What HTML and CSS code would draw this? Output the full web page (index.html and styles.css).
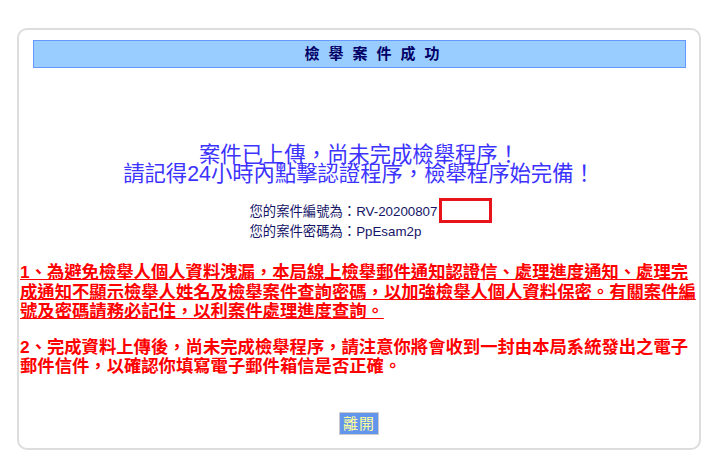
FILE: index.html
```html
<!DOCTYPE html>
<html lang="zh-Hant">
<head>
    <meta charset="UTF-8">
    <meta name="viewport" content="width=device-width, initial-scale=1.0">
    <link rel="stylesheet" href="styles.css">
    <title>檢舉案件成功</title>
</head>
<body>
    <div class="card">
        <div class="title_bar">檢舉案件成功</div>

        <div class="notice">
            <div>案件已上傳，尚未完成檢舉程序！</div>
            <div>請記得24小時內點擊認證程序，檢舉程序始完備！</div>
        </div>

        <div class="case_info">
            <div class="info_box">
                <div>您的案件編號為：RV-20200807<span class="mask"></span></div>
                <div>您的案件密碼為：PpEsam2p</div>
            </div>
        </div>

        <p class="warn"><u>1、為避免檢舉人個人資料洩漏，本局線上檢舉郵件通知認證信、處理進度通知、處理完成通知不顯示檢舉人姓名及檢舉案件查詢密碼，以加強檢舉人個人資料保密。有關案件編號及密碼請務必記住，以利案件處理進度查詢。</u></p>

        <p class="warn">2、完成資料上傳後，尚未完成檢舉程序，請注意你將會收到一封由本局系統發出之電子郵件信件，以確認你填寫電子郵件箱信是否正確。</p>

        <div class="actions">
            <button class="leave">離開</button>
        </div>
    </div>
</body>
</html>
```

FILE: styles.css
```css
*{
    box-sizing: border-box;
}

body{
    margin: 0;
    padding: 28px 0 0 17px;
    background: #ffffff;
    font-family: "Liberation Sans", Arial, "Noto Sans CJK TC", sans-serif;
}

.card
{
    width: 684px;
    height: 422px;
    border: 2px solid #dddddd;
    border-radius: 10px;
    padding: 10px 0 0 0;
}

.title_bar
{
    margin: 0 13px 0 14px;
    height: 28px;
    line-height: 26px;
    background-color: #99ccff;
    border: 1px solid #6699ff;
    color: #000066;
    text-align: center;
    font-size: 15px;
    font-weight: bold;
    letter-spacing: 9px;
    padding-left: 34px;
}

.notice
{
    margin-top: 78px;
    text-align: center;
    color: #3d33ff;
    font-size: 21.33px;
    line-height: 19px;
}

.case_info
{
    margin-top: 14px;
    text-align: center;
}

.info_box
{
    display: inline-block;
    text-align: left;
    color: #141466;
    font-size: 13.33px;
    line-height: 18px;
    padding-left: 24px;
}

.mask
{
    display: inline-block;
    width: 53px;
    height: 25px;
    border: 3px solid #e8141c;
    background: #ffffff;
    vertical-align: -7px;
    margin-left: 2px;
}

.warn
{
    margin: 0 0 0 1px;
    color: #ff0000;
    font-size: 17.33px;
    font-weight: bold;
    line-height: 19.5px;
}

.warn:first-of-type
{
    margin-top: 22px;
}

.warn + .warn
{
    margin-top: 16px;
}

.actions
{
    margin-top: 35px;
    text-align: center;
}

.leave
{
    height: 23px;
    padding: 0 3px;
    background-color: #6495ed;
    border: 1px solid #cccccc;
    color: #ffff99;
    font-size: 15px;
    line-height: 20px;
    letter-spacing: 1px;
    font-family: "Noto Sans CJK TC", sans-serif;
    cursor: pointer;
}
```
